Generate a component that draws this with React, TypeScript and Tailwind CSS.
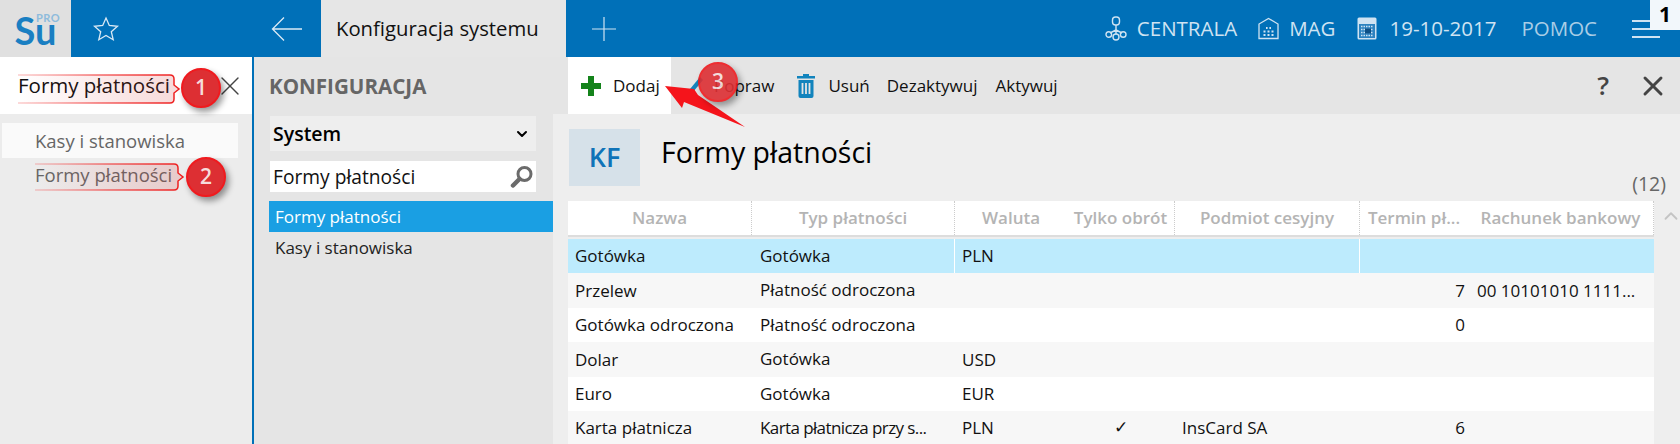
import { ChevronDown, ChevronUp, X } from "lucide-react";

const columns = [
  { label: "Nazwa", width: "w-[184px]", divider: true },
  { label: "Typ płatności", width: "w-[203px]", divider: true },
  { label: "Waluta", width: "w-[112px]" },
  { label: "Tylko obrót", width: "w-[108px]", divider: true },
  { label: "Podmiot cesyjny", width: "w-[185px]", divider: true },
  { label: "Termin pł...", width: "w-[108px]" },
  { label: "Rachunek bankowy", width: "w-[186px]", divider: true },
];

const rows = [
  { name: "Gotówka", type: "Gotówka", currency: "PLN", selected: true },
  { name: "Przelew", type: "Płatność odroczona", term: "7", account: "00 10101010 1111..." },
  { name: "Gotówka odroczona", type: "Płatność odroczona", term: "0" },
  { name: "Dolar", type: "Gotówka", currency: "USD" },
  { name: "Euro", type: "Gotówka", currency: "EUR" },
  { name: "Karta płatnicza", type: "Karta płatnicza przy s...", currency: "PLN", turnover: true, assignee: "InsCard SA", term: "6" },
];

function NetworkIcon() {
  return (
    <svg width="22" height="25" viewBox="0 0 22 25" fill="none" stroke="#cfe3f2" strokeWidth="1.4">
      <rect x="7.5" y="1" width="7" height="8" rx="3" />
      <path d="M11 9v5M11 14l-6 3M11 14l6 3M11 14v4" />
      <circle cx="3.8" cy="18.5" r="2.8" />
      <circle cx="18.2" cy="18.5" r="2.8" />
      <circle cx="11" cy="21" r="3" />
    </svg>
  );
}

function BuildingIcon() {
  return (
    <svg width="21" height="23" viewBox="0 0 21 23" fill="none" stroke="#cfe3f2" strokeWidth="1.3">
      <path d="M1 21.5V7l9.5-5.5L20 7v14.5z" />
      <path d="M8 11h1.6M11.4 11H13M5.5 14.5h2M9.5 14.5h2M13.5 14.5h2M5.5 18h2M9.5 18h2M13.5 18h2" strokeWidth="2" />
    </svg>
  );
}

function CalendarIcon() {
  return (
    <svg width="20" height="23" viewBox="0 0 20 23">
      <rect x="0.5" y="0.5" width="19" height="22" rx="1.5" fill="#cfe3f2" />
      <rect x="2" y="7" width="16" height="14" fill="#2d83c0" />
      <path d="M4 9.5h12M4 12.5h12M4 15.5h12M4 18.5h12" stroke="#cfe3f2" strokeWidth="1.5" strokeDasharray="1.5 1" />
      <rect x="8" y="11.5" width="6" height="5" fill="#0c4f85" />
    </svg>
  );
}

function TrashIcon() {
  return (
    <svg width="18" height="24" viewBox="0 0 18 24" fill="#1284bd">
      <path d="M6 0h6v2h6v2.5H0V2h6z" />
      <path d="M1.5 6h15v16a2 2 0 0 1-2 2h-11a2 2 0 0 1-2-2z" />
      <path d="M5.5 9v11M9 9v11M12.5 9v11" stroke="#e5e5e5" strokeWidth="1.8" />
    </svg>
  );
}

function SearchIcon() {
  return (
    <svg width="24" height="24" viewBox="0 0 24 24" fill="none" stroke="#6b6b6b">
      <circle cx="14.5" cy="9" r="6.5" strokeWidth="3" />
      <path d="M9.5 14L3 20.5" strokeWidth="4.5" strokeLinecap="round" />
    </svg>
  );
}

function Bubble({ n, className }: { n: number; className: string }) {
  return (
    <div className={`absolute flex size-10 items-center justify-center rounded-full border-2 border-[#f01a1e] bg-[#dd2f33] text-[21px] font-semibold text-[#f6dcdc] shadow-[3px_4px_6px_rgba(0,0,0,0.4)] ${className}`}>
      {n}
    </div>
  );
}

function Annotations() {
  return (
    <>
      <svg className="absolute inset-0" width="1680" height="444" fill="none">
        <defs>
          <linearGradient id="fade" x1="0" x2="1" y1="0" y2="0">
            <stop offset="0" stopColor="#e02020" stopOpacity="0" />
            <stop offset="1" stopColor="#d03030" stopOpacity="0.18" />
          </linearGradient>
          <linearGradient id="edge" x1="0" x2="1" y1="0" y2="0">
            <stop offset="0" stopColor="#f25a5a" stopOpacity="0.3" />
            <stop offset="0.5" stopColor="#f03030" stopOpacity="0.7" />
            <stop offset="1" stopColor="#ee1c1c" />
          </linearGradient>
        </defs>
        <path d="M18 75H170q4 0 4 4v6l5 4-5 4v6q0 4-4 4H18z" fill="url(#fade)" />
        <path d="M18 75H170q4 0 4 4v6l5 4-5 4v6q0 4-4 4H18" stroke="url(#edge)" strokeWidth="1.5" />
        <path d="M35 164H174q4 0 4 4v5l5 4-5 4v5q0 4-4 4H35z" fill="url(#fade)" />
        <path d="M35 164H174q4 0 4 4v5l5 4-5 4v5q0 4-4 4H35" stroke="url(#edge)" strokeWidth="1.5" />
        <path d="M665 86L694 89L698 95L745 127L684 102L682 108z" fill="#f5141b" />
      </svg>
      <Bubble n={1} className="left-[181px] top-[68px]" />
      <Bubble n={2} className="left-[186px] top-[157px]" />
      <Bubble n={3} className="left-[698px] top-[62px] opacity-90" />
    </>
  );
}

export default function App() {
  return (
    <div className="relative flex h-[444px] w-[1680px] flex-col overflow-hidden bg-[#eeeeee] font-['Open_Sans',sans-serif] text-[17px] text-[#111]">
      {/* Top bar */}
      <header className="flex h-[57px] shrink-0 items-center bg-[#0070b8] text-[#cfe3f2]">
        <div className="relative flex h-full w-[71px] items-center justify-center bg-[#e0e0e0] font-['Lato',sans-serif] text-[#1a7fc2]">
          <span className="mt-[3px] text-[38px] font-bold leading-none">Su</span>
          <span className="absolute left-[36px] top-[10px] text-[11px] font-bold tracking-[0.5px] text-[#8dbbdc]">PRO</span>
        </div>
        <div className="flex w-[200px] pl-[22px]">
          <svg width="26" height="26" viewBox="0 0 26 26" fill="none" stroke="#dbeaf5" strokeWidth="1.3">
            <path d="M13 2l3.3 7.5 8.2.8-6.2 5.4 1.9 8L13 19.5l-7.2 4.2 1.9-8-6.2-5.4 8.2-.8z" />
          </svg>
        </div>
        <div className="flex w-[50px]">
          <svg width="32" height="26" viewBox="0 0 32 26" fill="none" stroke="#dbeaf5" strokeWidth="1.3">
            <path d="M31 13H2M13 1.5L1.5 13 13 24.5" />
          </svg>
        </div>
        <div className="flex h-full w-[245px] items-center bg-[#e6e6e6] pl-[15px] text-[20.3px] text-[#111]">Konfiguracja systemu</div>
        <svg className="ml-[25px]" width="26" height="26" viewBox="0 0 26 26" stroke="#cfe3f2" strokeWidth="1.2">
          <path d="M13 1v24M1 13h24" />
        </svg>
        <div className="ml-auto flex items-center pr-[83px] text-[20.5px]">
          <NetworkIcon />
          <span className="ml-[10px]">CENTRALA</span>
          <span className="ml-[21px]"><BuildingIcon /></span>
          <span className="ml-[10px]">MAG</span>
          <span className="ml-[22px]"><CalendarIcon /></span>
          <span className="ml-[12px]">19-10-2017</span>
          <span className="ml-[25px] text-[#a9cde6]">POMOC</span>
        </div>
      </header>
      <div className="absolute right-[20px] top-[20px] flex w-[28px] flex-col gap-[6px]">
        <div className="h-[2px] bg-[#cfe3f2]" />
        <div className="h-[2px] bg-[#cfe3f2]" />
        <div className="h-[2px] bg-[#cfe3f2]" />
      </div>
      <div className="absolute right-0 top-0 flex h-[30px] w-[30px] items-center justify-center bg-[#f2f7fb] text-[21px] font-bold text-black">1</div>

      <div className="flex min-h-0 flex-1">
        {/* Search panel */}
        <aside className="w-[254px] shrink-0 border-r-2 border-[#0070b8] bg-[#ececec]">
          <div className="flex h-[57px] items-center justify-between bg-white pl-[18px] pr-[6px] text-[20.5px]">
            <span className="-mr-[4px]">Formy płatności</span>
            <X className="size-[32px] text-[#444]" strokeWidth={1} />
          </div>
          <div className="ml-[2px] mt-[9px] flex h-[35px] w-[236px] items-center bg-[#fafafa] pl-[33px] text-[18.5px] text-[#666]">Kasy i stanowiska</div>
          <div className="flex h-[34px] items-center pl-[35px] text-[18.5px] text-[#666]">Formy płatności</div>
        </aside>

        {/* Configuration tree */}
        <nav className="w-[299px] shrink-0 bg-[#e5e5e5] pl-[15px]">
          <div className="flex h-[59px] items-center text-[20.6px] font-bold text-[#666]">KONFIGURACJA</div>
          <div className="ml-[1px] flex h-[35px] w-[266px] items-center justify-between bg-[#eeeeee] pl-[3px] pr-[6px] text-[19.5px] font-semibold text-black">
            <span>System</span>
            <ChevronDown className="size-[16px]" strokeWidth={3} />
          </div>
          <div className="ml-[1px] mt-[10px] flex h-[31px] w-[266px] items-center justify-between bg-white pl-[3px] pr-[2px] text-[19.2px]">
            <span className="mt-[2px]">Formy płatności</span>
            <SearchIcon />
          </div>
          <div className="mt-[9px] flex h-[31px] items-center bg-[#1a9fe3] pl-[6px] text-[17px] text-white">Formy płatności</div>
          <div className="flex h-[32px] items-center pl-[6px] text-[17px] text-[#222]">Kasy i stanowiska</div>
        </nav>

        <main className="flex min-w-0 flex-1 flex-col">
          {/* Toolbar */}
          <div className="flex h-[57px] shrink-0 items-center bg-[#e5e5e5] pl-[15px] text-[17px]">
            <div className="flex h-full w-[103px] items-center bg-white pl-[13px]">
              <svg width="20" height="20" viewBox="0 0 20 20" stroke="#14831b" strokeWidth="6">
                <path d="M10 0v20M0 10h20" />
              </svg>
              <span className="ml-[12px]">Dodaj</span>
            </div>
            <svg className="ml-[17px]" width="16" height="18" viewBox="0 0 16 18" fill="#1284bd">
              <path d="M12 0l3 3L5 15l-5 3 2-6z" />
            </svg>
            <span className="ml-[10px]">Popraw</span>
            <span className="ml-[23px]"><TrashIcon /></span>
            <span className="ml-[13px]">Usuń</span>
            <span className="ml-[17px]">Dezaktywuj</span>
            <span className="ml-[18px]">Aktywuj</span>
            <span className="ml-auto text-[26px] font-semibold text-[#444]">?</span>
            <X className="ml-[28px] mr-[11px] size-[32px] text-[#444]" strokeWidth={2.2} />
          </div>

          {/* Page title */}
          <div className="flex h-[87px] shrink-0 pl-[16px] pt-[15px]">
            <div className="flex h-[57px] w-[71px] items-center justify-center bg-[#d6e1e9] text-[27px] font-semibold text-[#0f73b8]">KF</div>
            <h1 className="ml-[21px] mt-[4px] text-[28.5px] leading-[38px] text-black">Formy płatności</h1>
            <span className="ml-auto mr-[14px] mt-[43px] text-[19.5px] leading-[24px] text-[#666]">(12)</span>
          </div>

          {/* Table */}
          <div className="relative ml-[15px] w-[1086px]">
            <div className="flex h-[36px] border-b-2 border-[#dddddd] bg-white font-semibold text-[#b4b4b4]">
              {columns.map((col) => (
                <div key={col.label} className={`flex items-center justify-center whitespace-nowrap border-dotted border-[#cccccc] ${col.divider ? "border-r" : ""} ${col.width}`}>
                  {col.label}
                </div>
              ))}
            </div>
            <div className="mt-[2px]">
              {rows.map((row, i) => (
                <div key={row.name} className={`flex h-[34.4px] items-center whitespace-nowrap ${row.selected ? "bg-[#bdebfd]" : i % 2 === 1 ? "bg-[#f7f7f7]" : "bg-white"}`}>
                  <div className="w-[184px] pl-[7px]">{row.name}</div>
                  <div className={`h-full w-[203px] pl-[8px] leading-[34px] ${row.selected ? "border-r border-white" : ""} ${row.turnover ? "tracking-[-0.6px]" : ""}`}>{row.type}</div>
                  <div className="w-[112px] pl-[7px]">{row.currency}</div>
                  <div className="w-[108px] text-center font-['DejaVu_Sans',sans-serif] text-[17px]">{row.turnover && "✓"}</div>
                  <div className={`h-full w-[185px] pl-[7px] leading-[34px] ${row.selected ? "border-r border-white" : ""}`}>{row.assignee}</div>
                  <div className="w-[108px] pr-[3px] text-right">{row.term}</div>
                  <div className="w-[186px] pl-[9px]">{row.account}</div>
                </div>
              ))}
            </div>
            <ChevronUp className="absolute left-[1092px] top-[4px] size-[22px] text-[#c4c4c4]" strokeWidth={2} />
          </div>
        </main>
      </div>
      <Annotations />
    </div>
  );
}
